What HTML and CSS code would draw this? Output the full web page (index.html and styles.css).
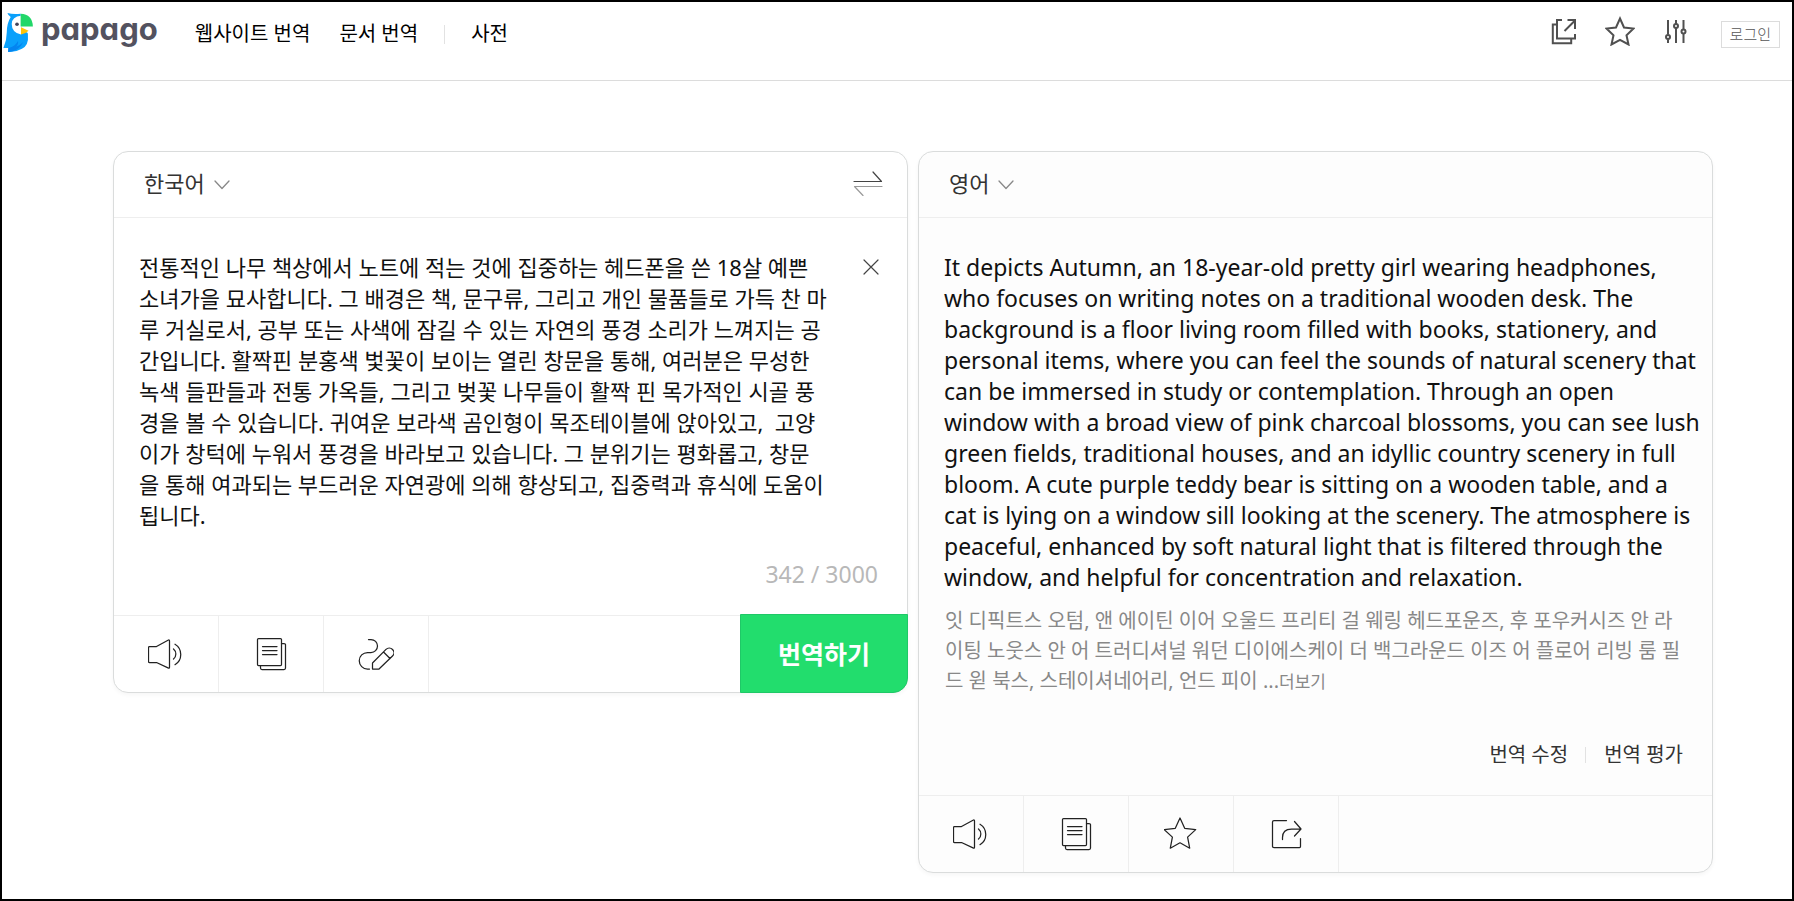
FILE: index.html
```html
<!DOCTYPE html>
<html lang="ko">
<head>
<meta charset="utf-8">
<title>papago</title>
<meta name="viewport" content="width=device-width, initial-scale=1">
<link rel="stylesheet" href="styles.css">
</head>
<body>
<svg class="sprite" aria-hidden="true">
  <symbol id="i-speaker" viewBox="0 0 36 32"><path d="M.5 9.500q0-1 1-1h7L20 2.200q1.500-.7 1.500.7v26.400q0 1.400-1.500.6L8.500 24.500H1.500q-1 0-1-1zM25.500 11a6.500 6.500 0 0 1 0 10M27 6.200a12 12 0 0 1 0 20.500"/></symbol>
  <symbol id="i-copy" viewBox="0 0 32 34"><rect x="2.500" y="1.500" width="24" height="27" rx="1"/><path d="M26.500 6.500H29q1.500 0 1.500 1v23.500q0 1.500-1.500 1.500H7q-1.500 0-1.500-1.500v-2.500M7.500 9.500h14.500M7.500 13.500h14.500M7.500 17.500h14.500"/></symbol>
  <symbol id="i-pen" viewBox="0 0 36 32"><path d="M10.500 1.500H13a6.500 6.500 0 0 1 0 13H9.500a8.200 8.200 0 0 0 0 16.500h2M14.500 25v6h6.500L34.500 18a4.600 4.600 0 0 0-6.500-6.600zM25.500 14l6.500 6.500"/></symbol>
  <symbol id="i-star" viewBox="0 0 34 34"><path d="M16 1l4.700 10.300 11 1.300-8.100 7.500 2.100 11.100L16 25.800 6.300 31.200l2.100-11.100-8.100-7.500 11-1.300z"/></symbol>
  <symbol id="i-share" viewBox="0 0 32 32"><path d="M16.500 2.500H4q-1.500 0-1.500 1.500v24.500q0 1 1.500 1h25.500q1 0 1-1V20.500M12.500 21.500v-2q0-8.500 9-8.500h9M24.500 3.500l6.500 7.500-6.500 7"/></symbol>
</svg>

<header class="header">
  <a class="logo" href="#" aria-label="papago">
    <svg class="logo-bird" viewBox="6 34 96 124" aria-hidden="true">
      <path fill="#0aa0fb" d="M22 37Q40 42 62 39L64 96Q86 90 84 104Q87 134 66 145Q44 157 24 155L25 143H10Q20 120 20 96Q20 68 32 49Q24 44 22 37Z"/>
      <path fill="#0484f0" d="M24 155L25 143Q46 138 54 122Q56 132 48 139Q62 134 70 125Q56 155 24 155Z"/>
      <path fill="#fff" d="M63 45V102Q35 96 35 70Q36 47 63 45Z"/>
      <circle cx="51" cy="71" r="5.500" fill="#44445a"/>
      <path fill="#22d769" d="M62 39Q98 41 99 78H62Z"/>
      <path fill="#ffc408" d="M63 80L86 91Q78 100 63 102Z"/>
    </svg>
    <span class="logo-text">papago</span>
  </a>
  <nav class="nav">
    <a href="#">웹사이트 번역</a>
    <a href="#">문서 번역</a>
    <span class="nav-divider"></span>
    <a href="#">사전</a>
  </nav>
  <div class="tools">
    <button class="tool" type="button" aria-label="새 창"><svg viewBox="0 0 30 30"><path d="M13 4H8v18.500h18V18M18.500 4H26v9M15.500 15L26 4.500M8 8.500H3.800v18.700h18.400V22.500"/></svg></button>
    <button class="tool" type="button" aria-label="즐겨찾기"><svg viewBox="0 0 30 30"><path d="M15 2.500l4 9 9.500 1-7 6.800 2 9.200-8.500-4.700-8.500 4.700 2-9.200-7-6.800 9.500-1z"/></svg></button>
    <button class="tool" type="button" aria-label="설정"><svg viewBox="0 0 30 30"><path d="M7 4v14.500M7 23.500V27M15 4v4M15 12v15M22.500 4v9.500M22.500 17.500V27"/><circle cx="7" cy="21" r="2"/><circle cx="15" cy="10" r="2"/><circle cx="22.500" cy="15.500" r="2"/></svg></button>
    <a class="login" href="#">로그인</a>
  </div>
</header>

<main class="panels">
  <section class="card">
    <div class="card-head">
      <button class="lang" type="button">한국어<svg viewBox="0 0 16 10" aria-hidden="true"><path d="M1 1l7 7.500L15 1"/></svg></button>
      <button class="swap" type="button" aria-label="언어 바꾸기"><svg viewBox="0 0 30 26"><path d="M1 11.500h27.500L20 2"/><path class="swap-back" d="M29 16.500H1.500L10 25.500"/></svg></button>
    </div>
    <div class="source">
      <textarea class="source-text" rows="9" spellcheck="false" aria-label="번역할 내용">전통적인 나무 책상에서 노트에 적는 것에 집중하는 헤드폰을 쓴 18살 예쁜
소녀가을 묘사합니다. 그 배경은 책, 문구류, 그리고 개인 물품들로 가득 찬 마
루 거실로서, 공부 또는 사색에 잠길 수 있는 자연의 풍경 소리가 느껴지는 공
간입니다. 활짝핀 분홍색 벛꽃이 보이는 열린 창문을 통해, 여러분은 무성한
녹색 들판들과 전통 가옥들, 그리고 벚꽃 나무들이 활짝 핀 목가적인 시골 풍
경을 볼 수 있습니다. 귀여운 보라색 곰인형이 목조테이블에 앉아있고,  고양
이가 창턱에 누워서 풍경을 바라보고 있습니다. 그 분위기는 평화롭고, 창문
을 통해 여과되는 부드러운 자연광에 의해 향상되고, 집중력과 휴식에 도움이
됩니다.</textarea>
      <button class="clear" type="button" aria-label="지우기"><svg viewBox="0 0 16 16"><path d="M1 1l14 14M15 1L1 15"/></svg></button>
    </div>
    <p class="count">342 / 3000</p>
    <div class="card-foot">
      <button class="action" type="button" aria-label="듣기"><svg class="w36"><use href="#i-speaker"/></svg></button>
      <button class="action" type="button" aria-label="복사"><svg class="w32"><use href="#i-copy"/></svg></button>
      <button class="action" type="button" aria-label="필기"><svg class="w36"><use href="#i-pen"/></svg></button>
      <button class="translate" type="button">번역하기</button>
    </div>
  </section>

  <section class="card card-target">
    <div class="card-head">
      <button class="lang" type="button">영어<svg viewBox="0 0 16 10" aria-hidden="true"><path d="M1 1l7 7.500L15 1"/></svg></button>
    </div>
    <p class="target-text" lang="en">It depicts Autumn, an 18-year-old pretty girl wearing headphones, who focuses on writing notes on a traditional wooden desk. The background is a floor living room filled with books, stationery, and personal items, where you can feel the sounds of natural scenery that can be immersed in study or contemplation. Through an open<br>window with a broad view of pink charcoal blossoms, you can see lush green fields, traditional houses, and an idyllic country scenery in full bloom. A cute purple teddy bear is sitting on a wooden table, and a<br>cat is lying on a window sill looking at the scenery. The atmosphere is peaceful, enhanced by soft natural light that is filtered through the window, and helpful for concentration and relaxation.</p>
    <p class="reading">잇 디픽트스 오텀, 앤 에이틴 이어 오울드 프리티 걸 웨링 헤드포운즈, 후 포우커시즈 안 라이팅 노웃스 안 어 트러디셔널 워던 디이에스케이 더 백그라운드 이즈 어 플로어 리빙 룸 필드 윋 북스, 스테이셔네어리, 언드 피이 ...<a class="more" href="#">더보기</a></p>
    <div class="feedback">
      <a href="#">번역 수정</a>
      <a href="#">번역 평가</a>
    </div>
    <div class="card-foot">
      <button class="action" type="button" aria-label="듣기"><svg class="w36"><use href="#i-speaker"/></svg></button>
      <button class="action" type="button" aria-label="복사"><svg class="w32"><use href="#i-copy"/></svg></button>
      <button class="action" type="button" aria-label="즐겨찾기"><svg class="w34"><use href="#i-star"/></svg></button>
      <button class="action" type="button" aria-label="공유"><svg class="w32 h32"><use href="#i-share"/></svg></button>
    </div>
  </section>
</main>
</body>
</html>
```
FILE: styles.css
```css
* { box-sizing: border-box; }

body {
  margin: 0;
  min-height: 100vh;
  border: 2px solid #000;
  background: #fff;
  color: #111;
  font-family: "Noto Sans", "Noto Sans CJK KR", sans-serif;
}

a { color: inherit; text-decoration: none; }
p { margin: 0; }
button { margin: 0; padding: 0; border: 0; background: none; color: inherit; font: inherit; cursor: pointer; }
svg { display: block; fill: none; stroke-linecap: round; stroke-linejoin: round; }
.sprite { position: absolute; width: 0; height: 0; }

.header {
  display: flex;
  align-items: flex-start;
  height: 79px;
  padding: 0 12px 0 0;
  border-bottom: 1px solid #dcdcdc;
}
.logo { display: flex; align-items: flex-start; gap: 7px; padding-top: 10px; }
.logo-bird { width: 32px; height: 41px; }
.logo-text {
  color: #53525f;
  font-family: Inter, sans-serif;
  font-size: 31px;
  font-weight: 700;
  line-height: 34px;
  font-feature-settings: "cv11";
}
.nav { display: flex; align-items: center; gap: 29px; margin-left: 37px; padding-top: 17px; color: #000; font-size: 20px; line-height: 30px; }
.nav-divider { width: 1px; height: 19px; margin: 0 -3px; background: #e2e2e2; }
.tools { display: flex; align-items: center; gap: 26px; margin-left: auto; padding-top: 14px; }
.tool svg { width: 30px; height: 30px; stroke: #505050; stroke-width: 2; stroke-linecap: butt; stroke-linejoin: miter; }
.tool { padding-bottom: 2px; }
.login { margin: 4px 0 0 4px; padding: 0 8px; border: 1px solid #dcdcdc; color: #555; font-size: 15px; font-weight: 300; line-height: 25px; }

.panels {
  display: grid;
  grid-template-columns: 1fr 1fr;
  align-items: start;
  gap: 10px;
  padding: 70px 79px 24px 111px;
}
.card { border: 1px solid #dadcdc; border-radius: 15px; background: #fff; box-shadow: 0 2px 4px rgba(0, 0, 0, .04); }
.card-target { background: #fdfdfd; }
.card-head { display: flex; align-items: center; justify-content: space-between; height: 66px; padding: 0 24px 3px 30px; border-bottom: 1px solid #eee; }
.lang { display: flex; align-items: center; gap: 9px; color: #333; font-size: 22px; line-height: 32px; }
.lang svg { width: 16px; height: 10px; margin-top: 4px; stroke: #888; stroke-width: 1.3; }
.swap svg { width: 30px; height: 26px; stroke: #444; stroke-width: 1.2; }
.swap .swap-back { stroke: #999; }

.source { display: flex; align-items: flex-start; justify-content: space-between; padding: 34px 28px 0 25px; }
.source-text {
  flex: 1;
  margin: 0 20px 0 0;
  padding: 0;
  border: 0;
  outline: 0;
  resize: none;
  overflow: hidden;
  background: transparent;
  color: #111;
  font: inherit;
  font-size: 22px;
  line-height: 31px;
}
.clear { padding-top: 7px; }
.clear svg { width: 16px; height: 16px; stroke: #444; stroke-width: 1.2; }
.count { padding: 27px 29px 25px; color: #b8b8b8; font-size: 23px; line-height: 32px; text-align: right; }

.card-foot { display: flex; height: 77px; border-top: 1px solid #eee; }
.action { display: flex; align-items: center; justify-content: center; width: 105px; border-right: 1px solid #eee; }
.action svg { height: 32px; stroke: #222; stroke-width: 1.25; }
.action .w36 { width: 36px; }
.action .w34 { width: 34px; height: 34px; }
.action .w32 { width: 32px; height: 34px; }
.action .h32 { height: 32px; }
.translate {
  width: 168px;
  margin: -2px -1px -1px auto;
  padding-bottom: 2px;
  border: 1px solid #1fc867;
  border-radius: 0 0 15px 0;
  background: #22dd6d;
  color: #fff;
  font-size: 25px;
  font-weight: 700;
}

.target-text { padding: 34px 8px 0 25px; font-size: 23px; line-height: 31px; }
.reading { padding: 13px 25px 0 26px; color: #888; font-size: 20px; line-height: 30px; }
.more { font-size: 17px; }
.feedback { display: flex; justify-content: flex-end; padding: 43px 29px 25px; color: #333; font-size: 20px; line-height: 30px; }
.feedback a + a { margin-left: 17px; padding-left: 19px; background: linear-gradient(#e2e2e2, #e2e2e2) 0 50% / 1px 16px no-repeat; }
```
